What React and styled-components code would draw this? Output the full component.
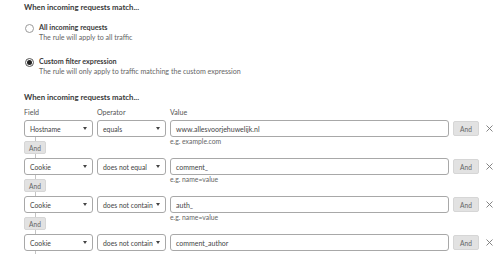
import React from "react";
import styled, { createGlobalStyle } from "styled-components";

const Global = createGlobalStyle`
  html, body { margin: 0; padding: 0; background: #fff; }
  body { font-family: Lato, "Open Sans", sans-serif; color: #333; }
  * { box-sizing: border-box; }
`;

const Page = styled.div`
  width: 500px;
  height: 254px;
  overflow: hidden;
  padding: 2px 0 0 24px;
  white-space: nowrap;
`;

const Heading = styled.div`
  font-size: 7.8px;
  font-weight: 700;
  line-height: 10px;
  height: 10px;
  color: #3a3a3a;
  margin-top: ${(p) => p.$top || 0}px;
`;

const RadioOption = styled.div`
  display: flex;
  align-items: flex-start;
  margin-top: ${(p) => p.$top}px;
  margin-left: 1px;
`;

const RadioCircle = styled.span`
  width: 9px;
  height: 9px;
  border-radius: 50%;
  border: 1px solid ${(p) => (p.$checked ? "#555" : "#9a9a9a")};
  display: flex;
  align-items: center;
  justify-content: center;
  margin-top: 1px;
  margin-right: 5px;
  &::after {
    content: "";
    width: 5px;
    height: 5px;
    border-radius: 50%;
    background: ${(p) => (p.$checked ? "#222" : "transparent")};
  }
`;

const RadioText = styled.div`
  display: flex;
  flex-direction: column;
`;

const RadioTitle = styled.div`
  font-size: 7.2px;
  font-weight: 700;
  line-height: 10px;
  color: #3a3a3a;
`;

const RadioSub = styled.div`
  font-size: 7.1px;
  line-height: 10px;
  color: #666;
`;

const Grid = styled.div`
  display: grid;
  grid-template-columns: 69px 69px 279px 26px 13px;
  column-gap: 4px;
  align-items: center;
`;

const Labels = styled(Grid)`
  margin-top: 6px;
  height: 10px;
  margin-bottom: 2px;
`;

const Label = styled.div`
  font-size: 7.1px;
  line-height: 10px;
  color: #555;
`;

const Row = styled(Grid)`
  height: 17px;
`;

const SelectBox = styled.div`
  height: 17px;
  border: 1px solid #a8a8a8;
  border-radius: 3px;
  display: flex;
  align-items: center;
  justify-content: space-between;
  padding: 0 5px 0 5px;
  font-size: 6.8px;
  color: #444;
  background: #fff;
`;

const Caret = styled.span`
  width: 0;
  height: 0;
  flex: none;
  margin-left: 3px;
  border-left: 2.5px solid transparent;
  border-right: 2.5px solid transparent;
  border-top: 3px solid #444;
`;

const ValueInput = styled.div`
  height: 17px;
  border: 1px solid #a8a8a8;
  border-radius: 3px;
  display: flex;
  align-items: center;
  padding: 0 5px;
  font-size: 7px;
  color: #444;
`;

const AndButton = styled.div`
  height: ${(p) => (p.$small ? 13 : 15)}px;
  width: ${(p) => (p.$small ? 22 : 26)}px;
  background: #e2e2e2;
  border: 1px solid #d6d6d6;
  border-radius: 2px;
  display: flex;
  align-items: center;
  justify-content: center;
  font-size: 6.6px;
  color: #666;
`;

const Remove = styled.div`
  display: flex;
  align-items: center;
  justify-content: center;
`;

const Between = styled(Grid)`
  height: 21px;
  align-items: start;
`;

const Connector = styled.div`
  display: flex;
  flex-direction: column;
  align-items: center;
  width: 22px;
  height: 21px;
  &::before,
  &::after {
    content: "";
    width: 1px;
    height: 4px;
    background: #c4c4c4;
  }
`;

const Tail = styled.div`
  width: 22px;
  display: flex;
  justify-content: center;
  &::before {
    content: "";
    width: 1px;
    height: 6px;
    background: #c4c4c4;
  }
`;

const Hint = styled.div`
  grid-column: 3;
  font-size: 6.8px;
  line-height: 9px;
  color: #666;
`;

const XIcon = () => (
  <svg width="7" height="7" viewBox="0 0 7 7">
    <path d="M0.5 0.5 L6.5 6.5 M6.5 0.5 L0.5 6.5" stroke="#777" strokeWidth="0.9" fill="none" />
  </svg>
);

const rules = [
  { field: "Hostname", op: "equals", value: "www.allesvoorjehuwelijk.nl", hint: "e.g. example.com" },
  { field: "Cookie", op: "does not equal", value: "comment_", hint: "e.g. name=value" },
  { field: "Cookie", op: "does not contain", value: "auth_", hint: "e.g. name=value" },
  { field: "Cookie", op: "does not contain", value: "comment_author" },
];

export default function App() {
  return (
    <Page>
      <Global />
      <Heading>When incoming requests match...</Heading>
      <RadioOption $top={11}>
        <RadioCircle />
        <RadioText>
          <RadioTitle>All incoming requests</RadioTitle>
          <RadioSub>The rule will apply to all traffic</RadioSub>
        </RadioText>
      </RadioOption>
      <RadioOption $top={14}>
        <RadioCircle $checked />
        <RadioText>
          <RadioTitle>Custom filter expression</RadioTitle>
          <RadioSub>The rule will only apply to traffic matching the custom expression</RadioSub>
        </RadioText>
      </RadioOption>
      <Heading $top={15}>When incoming requests match...</Heading>
      <Labels>
        <Label>Field</Label>
        <Label>Operator</Label>
        <Label>Value</Label>
      </Labels>
      {rules.map((r, i) => (
        <React.Fragment key={i}>
          <Row>
            <SelectBox>
              {r.field}
              <Caret />
            </SelectBox>
            <SelectBox>
              {r.op}
              <Caret />
            </SelectBox>
            <ValueInput>{r.value}</ValueInput>
            <AndButton>And</AndButton>
            <Remove>
              <XIcon />
            </Remove>
          </Row>
          {i < rules.length - 1 ? (
            <Between>
              <Connector>
                <AndButton $small>And</AndButton>
              </Connector>
              <Hint>{r.hint}</Hint>
            </Between>
          ) : (
            <Between>
              <Tail />
            </Between>
          )}
        </React.Fragment>
      ))}
    </Page>
  );
}
